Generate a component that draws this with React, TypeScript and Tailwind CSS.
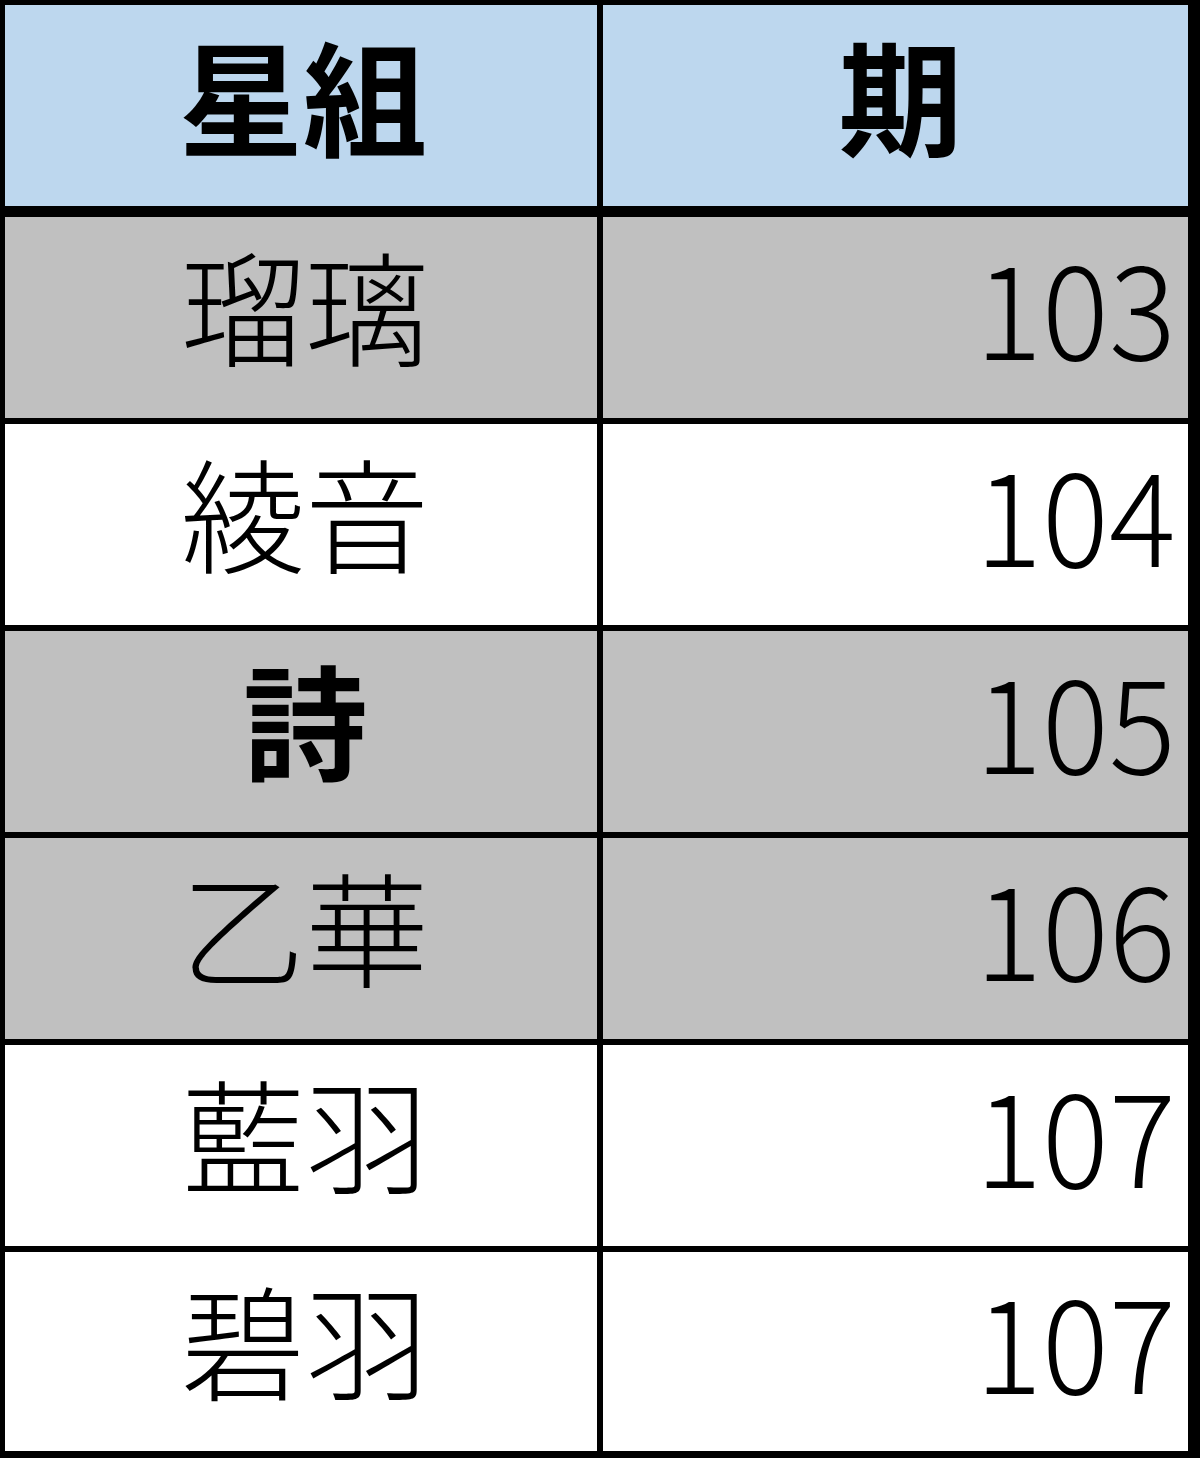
const rows = [
  { name: '瑠璃', term: '103', gray: true, bold: false },
  { name: '綾音', term: '104', gray: false, bold: false },
  { name: '詩', term: '105', gray: true, bold: true },
  { name: '乙華', term: '106', gray: true, bold: false },
  { name: '藍羽', term: '107', gray: false, bold: false },
  { name: '碧羽', term: '107', gray: false, bold: false },
]

const font = { fontFamily: '"Noto Sans CJK JP", "Noto Sans", sans-serif' }

export default function App() {
  return (
    <div
      className="flex h-[1458px] w-[1200px] flex-col bg-black pb-[7px] pl-[5px] pr-[12px] pt-[5px] text-black"
      style={font}
    >
      <div className="grid h-[201px] grid-cols-[592px_585px] gap-x-[6px]">
        <div className="flex items-center justify-center bg-[#bdd7ee] pb-[26px] pl-[4px] text-[124px] font-bold leading-none">
          星組
        </div>
        <div className="flex items-center justify-center bg-[#bdd7ee] pb-[26px] pl-[10px] text-[124px] font-bold leading-none">
          期
        </div>
      </div>
      <div className="mt-[11px] flex flex-col gap-[6px]">
        {rows.map((row, i) => (
          <div
            key={i}
            className={`grid grid-cols-[592px_585px] gap-x-[6px] ${i === rows.length - 1 ? 'h-[199px]' : 'h-[201px]'}`}
          >
            <div
              className={`flex items-center justify-center pb-[30px] pl-[8px] text-[124px] leading-none ${row.gray ? 'bg-[#c0c0c0]' : 'bg-white'} ${row.bold ? 'font-bold' : 'font-light'}`}
            >
              {row.name}
            </div>
            <div
              className={`flex items-center justify-end pb-[30px] pr-[12px] text-[130px] font-light leading-none ${row.gray ? 'bg-[#c0c0c0]' : 'bg-white'}`}
            >
              <span className="inline-block origin-right scale-x-[0.96]">{row.term}</span>
            </div>
          </div>
        ))}
      </div>
    </div>
  )
}
